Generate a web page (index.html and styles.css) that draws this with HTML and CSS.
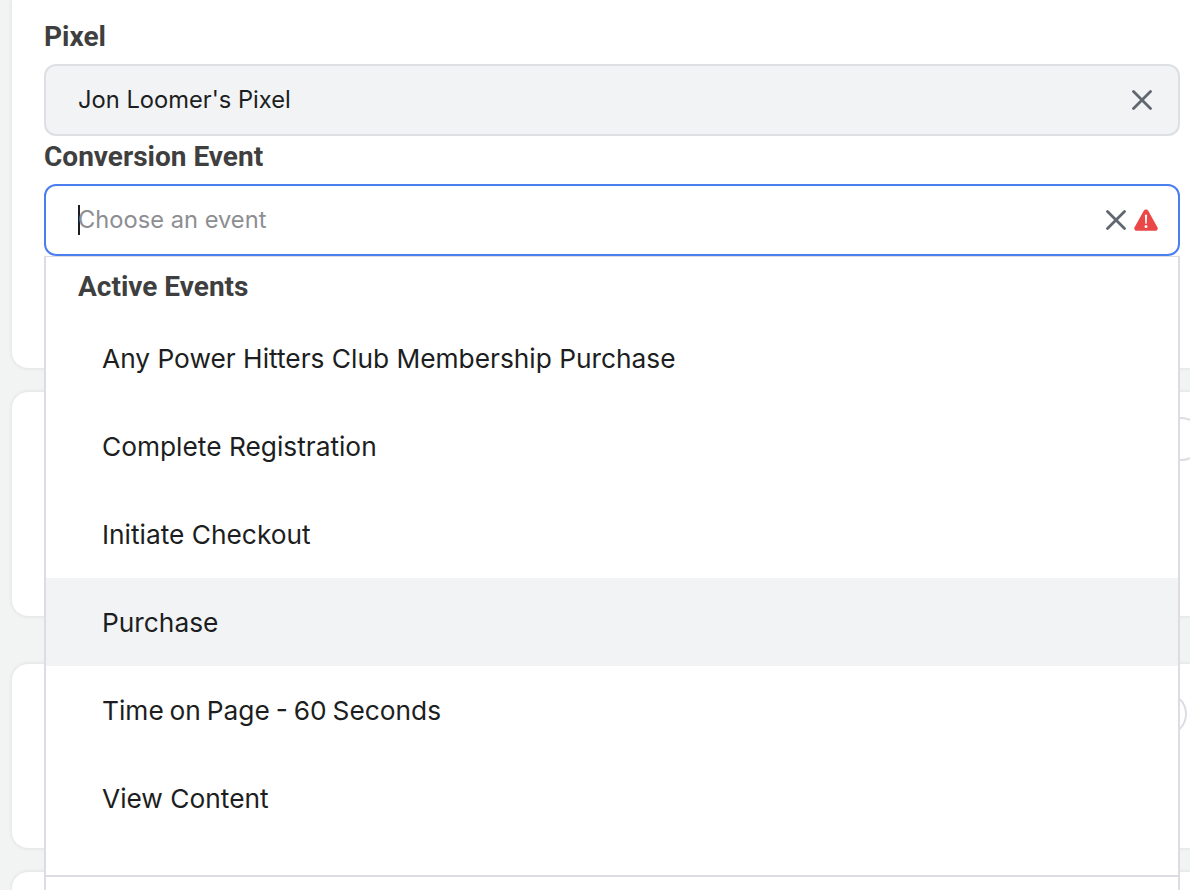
FILE: index.html
```html
<!DOCTYPE html>
<html lang="en">
<head>
<meta charset="utf-8">
<title>Conversion Event</title>
<link rel="stylesheet" href="styles.css">
</head>
<body>
<main class="page">
  <section class="card card-form">
    <label class="label">Pixel</label>
    <div class="select select-filled">
      <span class="select-value">Jon Loomer's Pixel</span>
      <svg class="icon-x" viewBox="0 0 20 20"><path d="M1.5 1.5 18.5 18.5M18.5 1.5 1.5 18.5"/></svg>
    </div>
    <label class="label label-second">Conversion Event</label>
    <div class="combo">
      <div class="select select-focus">
        <span class="caret"></span>
        <span class="select-placeholder">Choose an event</span>
        <svg class="icon-x icon-x-tight" viewBox="0 0 20 20"><path d="M1.5 1.5 18.5 18.5M18.5 1.5 1.5 18.5"/></svg>
        <svg class="icon-warn" viewBox="0 0 24 22"><path class="warn-bg" d="M12 .4c-.9 0-1.700.5-2.100 1.200L.6 18.200c-.9 1.600.2 3.500 2.100 3.500h18.600c1.900 0 3-1.900 2.100-3.500L14.100 1.600C13.700.9 12.900.4 12 .4z"/><path class="warn-mark" d="M10.900 5.800h2.200l-.4 9h-1.400zM12 16a1.500 1.500 0 1 1 0 3 1.500 1.500 0 0 1 0-3z"/></svg>
      </div>
      <div class="menu">
        <div class="menu-heading">Active Events</div>
        <ul class="menu-list">
          <li class="menu-item">Any Power Hitters Club Membership Purchase</li>
          <li class="menu-item">Complete Registration</li>
          <li class="menu-item">Initiate Checkout</li>
          <li class="menu-item menu-item-hover">Purchase</li>
          <li class="menu-item menu-item-time">Time on Page - 60 Seconds</li>
          <li class="menu-item">View Content</li>
        </ul>
        <div class="menu-footer"></div>
      </div>
    </div>
  </section>
  <section class="card card-two"><span class="ring ring-one"></span></section>
  <section class="card card-three"><span class="ring ring-two"></span></section>
  <section class="card card-four"></section>
</main>
</body>
</html>
```
FILE: styles.css
```css
* { box-sizing: border-box; }
html, body {
  margin: 0;
  height: 890px;
  overflow: hidden;
  background: #f2f3f3;
}
.page {
  display: flex;
  flex-direction: column;
  padding-left: 12px;
  width: 1230px;
  height: 890px;
  overflow: hidden;
}
.card {
  position: relative;
  background: #fff;
  border-radius: 16px;
  box-shadow: 0 0 4px rgba(0, 0, 0, 0.1);
  flex: none;
}
.card-form {
  height: 368px;
  border-radius: 0 0 16px 16px;
  padding: 20px 0 0 32px;
  z-index: 2;
  background: #fff;
}
.card-two { height: 224px; margin-top: 24px; }
.card-three { height: 184px; margin-top: 48px; }
.card-four { height: 18px; margin-top: 24px; border-radius: 16px 16px 0 0; }
.label {
  display: block;
  width: 1136px;
  font: 700 28px/34px Roboto, "Liberation Sans", sans-serif;
  color: #3f3f3f;
}
.label-second { margin-top: 4px; }
.select {
  display: flex;
  align-items: center;
  width: 1136px;
  height: 72px;
  margin-top: 10px;
  padding: 0 26px 0 32px;
  border: 2px solid #dddfe2;
  border-radius: 12px;
  font: 400 23.700px/34px Inter, "Liberation Sans", sans-serif;
  color: #1c1e21;
}
.select-filled { background: #f2f3f5; }
.select-value { flex: 1; }
.select-focus {
  position: relative;
  border-color: #4a7ff0;
  background: #fff;
  padding-right: 20px;
}
.select-placeholder { flex: 1; color: #8d8e92; }
.caret {
  width: 2px;
  height: 30px;
  margin-right: -2px;
  background: #1c1e21;
}
.icon-x {
  width: 20px;
  height: 20px;
  flex: none;
  fill: none;
  stroke: #606770;
  stroke-width: 2.800;
  stroke-linecap: round;
}
.icon-x-tight { margin-right: 8px; }
.icon-warn { width: 24px; height: 22px; flex: none; }
.warn-bg { fill: #eb4747; }
.warn-mark { fill: #fff; }
.combo { position: relative; width: 1136px; }
.menu {
  position: absolute;
  top: 72px;
  left: 0;
  width: 1136px;
  height: 700px;
  background: #fff;
  border: 2px solid #dcdce2;
  border-top-width: 1px;
}
.menu-heading {
  height: 57px;
  padding: 13px 0 0 32px;
  font: 700 28px/34px Roboto, "Liberation Sans", sans-serif;
  color: #3f3f3f;
}
.menu-list { list-style: none; margin: 0; padding: 0; }
.menu-item {
  height: 88px;
  padding-left: 56px;
  font: 400 26.300px/90px Inter, "Liberation Sans", sans-serif;
  color: #1c1e21;
}
.menu-item-hover { background: #f2f3f5; }
.menu-item-time { word-spacing: -1.500px; }
.menu-footer {
  margin-top: 33px;
  border-top: 2px solid #dcdce2;
}
.ring {
  position: absolute;
  width: 44px;
  height: 44px;
  border: 2px solid #dadde1;
  border-radius: 50%;
}
.ring-one { left: 1147px; top: 25px; }
.ring-two { left: 1131px; top: 28px; }
```
